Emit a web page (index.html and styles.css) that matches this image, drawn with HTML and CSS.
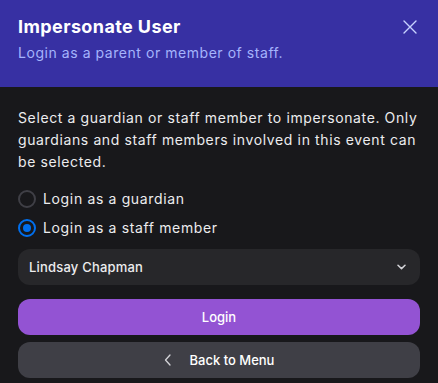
FILE: index.html
```html
<!DOCTYPE html>
<html lang="en">
<head>
    <meta charset="UTF-8">
    <meta name="viewport" content="width=device-width, initial-scale=1.0">
    <title>Impersonate User</title>
    <link rel="stylesheet" href="styles.css">
</head>
<body>
    <div class="modal">
        <header class="modal-header">
            <div>
                <h2 class="modal-title">Impersonate User</h2>
                <p class="modal-sub">Login as a parent or member of staff.</p>
            </div>
            <button class="close" aria-label="Close">
                <svg width="14" height="14" viewBox="0 0 14 14" fill="none" stroke="currentColor" stroke-width="1.4" stroke-linecap="round">
                    <path d="M1 1L13 13M13 1L1 13"/>
                </svg>
            </button>
        </header>
        <div class="modal-body">
            <p class="intro">Select a guardian or staff member to impersonate. Only guardians and staff members involved in this event can<br>be selected.</p>
            <div class="radio-group">
                <label class="radio">
                    <span class="radio-dot"></span>
                    <span>Login as a guardian</span>
                </label>
                <label class="radio checked">
                    <span class="radio-dot"></span>
                    <span>Login as a staff member</span>
                </label>
            </div>
            <div class="select">
                <span>Lindsay Chapman</span>
                <svg width="9" height="6" viewBox="0 0 9 6" fill="none" stroke="currentColor" stroke-width="1.5" stroke-linecap="round" stroke-linejoin="round">
                    <path d="M1 1.2L4.5 4.6L8 1.2"/>
                </svg>
            </div>
            <button class="btn btn-login">Login</button>
            <button class="btn btn-back">
                <svg width="8" height="12" viewBox="0 0 8 12" fill="none" stroke="currentColor" stroke-width="1.3" stroke-linecap="round" stroke-linejoin="round">
                    <path d="M6 1L1.5 6L6 11"/>
                </svg>
                <span>Back to Menu</span>
            </button>
        </div>
    </div>
</body>
</html>
```

FILE: styles.css
```css
html {
    background-color: #18181b;
}
body {
    margin: 0;
    font-family: Inter, "Open Sans", sans-serif;
    color: #ececee;
}
.modal {
    background-color: #18181b;
    min-height: 383px;
}
.modal-header {
    background-color: #3730a3;
    display: flex;
    justify-content: space-between;
    align-items: flex-start;
    padding: 15px 18px 24px 18px;
}
.modal-title {
    margin: 0;
    font-size: 18px;
    line-height: 24px;
    font-weight: 700;
    letter-spacing: 0.4px;
    color: #fff;
}
.modal-sub {
    margin: 4px 0 0 0;
    font-size: 14px;
    line-height: 20px;
    letter-spacing: 0.55px;
    color: #a5b4fc;
}
.close {
    background: none;
    border: none;
    padding: 0;
    margin: 5px 3px 0 0;
    color: #c7d2fe;
    cursor: pointer;
    display: flex;
}
.modal-body {
    padding: 20px 18px 5px 18px;
    display: flex;
    flex-direction: column;
}
.intro {
    margin: 0 -6px 0 0;
    font-size: 14px;
    line-height: 22px;
    letter-spacing: 0.62px;
}
.radio-group {
    display: flex;
    flex-direction: column;
    gap: 9px;
    margin-top: 16px;
}
.radio {
    display: flex;
    align-items: center;
    gap: 7px;
    font-size: 14px;
    line-height: 20px;
    letter-spacing: 0.65px;
    cursor: pointer;
}
.radio-dot {
    width: 18px;
    height: 18px;
    box-sizing: border-box;
    border: 2px solid #3f3f46;
    border-radius: 50%;
    display: flex;
    align-items: center;
    justify-content: center;
}
.radio.checked .radio-dot {
    border-color: #006fee;
}
.radio.checked .radio-dot::after {
    content: "";
    width: 8px;
    height: 8px;
    border-radius: 50%;
    background-color: #006fee;
}
.select {
    margin-top: 11px;
    height: 36px;
    box-sizing: border-box;
    background-color: #27272a;
    border-radius: 12px;
    display: flex;
    align-items: center;
    justify-content: space-between;
    padding: 0 14px 0 11px;
    font-size: 13px;
    font-weight: 500;
    letter-spacing: 0.2px;
}
.select svg {
    color: #d4d4d8;
}
.btn {
    height: 36px;
    border: none;
    border-radius: 12px;
    font-family: inherit;
    font-size: 13px;
    font-weight: 500;
    color: #fff;
    display: flex;
    align-items: center;
    justify-content: center;
    cursor: pointer;
}
.btn-login {
    margin-top: 14px;
    background-color: #9353d3;
}
.btn-back {
    margin-top: 7px;
    background-color: #3f3f46;
    gap: 18px;
}
.btn-back svg {
    color: #d4d4d8;
}
```
